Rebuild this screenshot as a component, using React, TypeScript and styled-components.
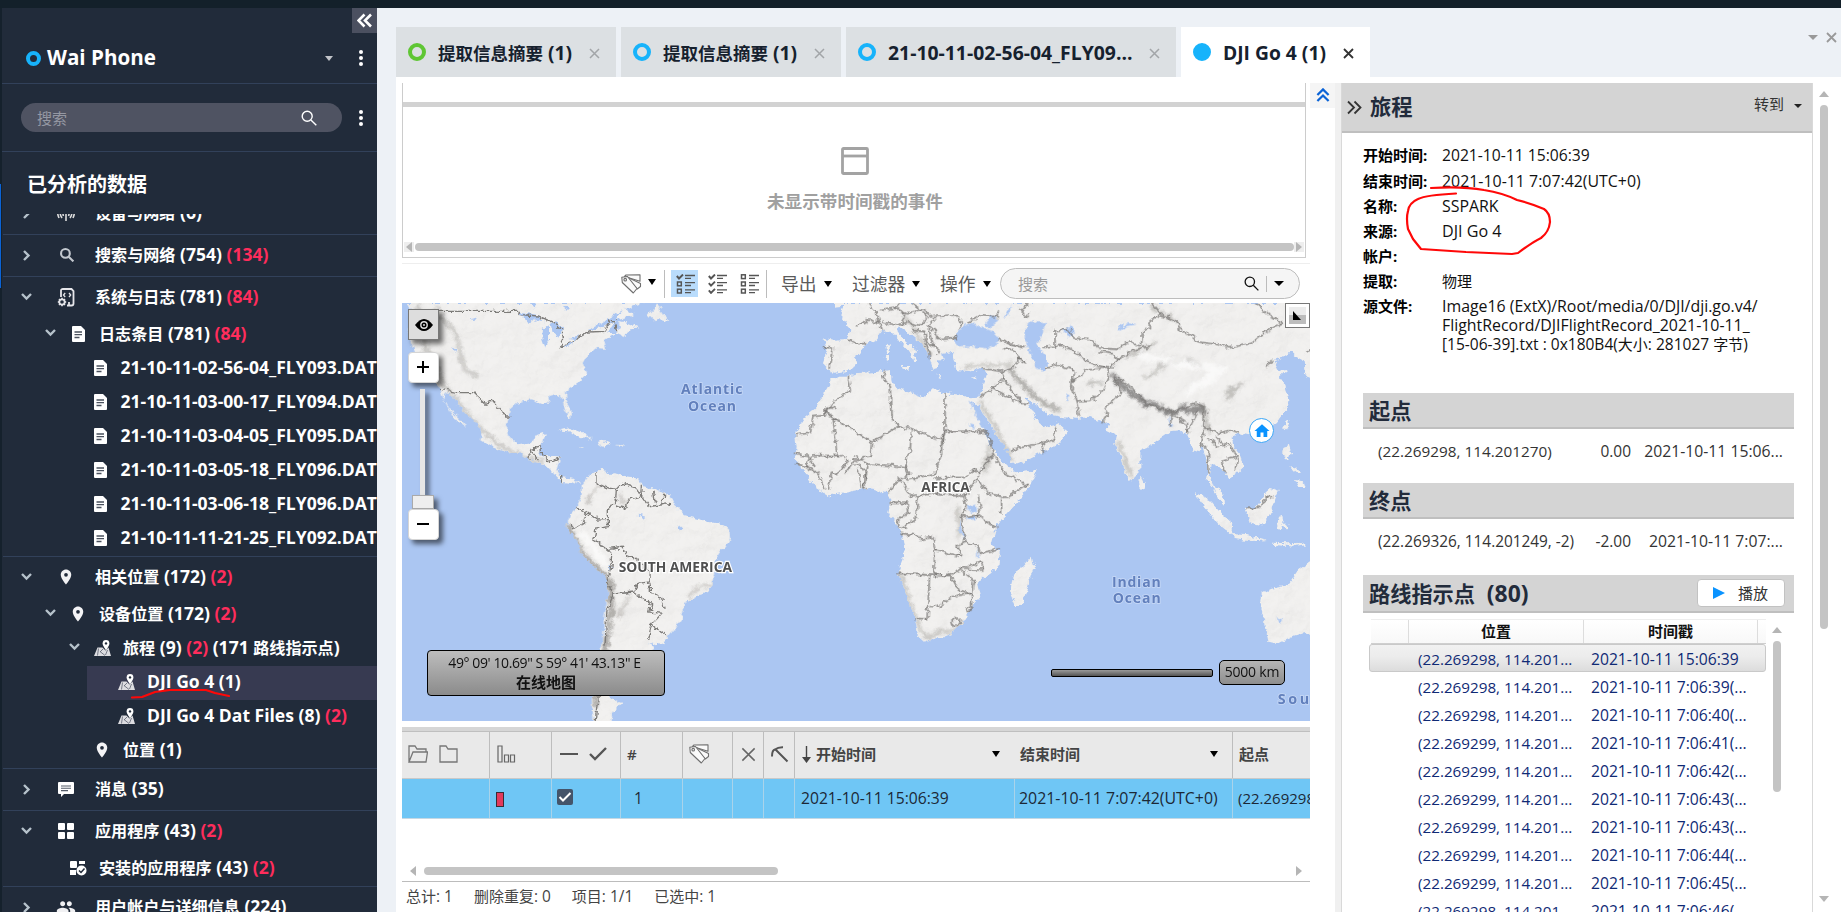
import React from 'react';
import styled, { createGlobalStyle, css } from 'styled-components';
import { MdLocationOn, MdPeople, MdHome } from 'react-icons/md';

const GlobalStyle = createGlobalStyle`
  *, *::before, *::after { box-sizing: border-box; }
  body {
    margin: 0;
    overflow: hidden;
    font-family: "Open Sans", "Noto Sans CJK SC", sans-serif;
    font-size: 15px;
    line-height: 20px;
    color: #111;
  }
  svg { display: block; flex: none; }
`;

/* ---------- text ---------- */

const Run = styled.span`
  white-space: pre;
`;
const LatinRun = styled.span<{ $ratio: number }>`
  font-size: ${p => p.$ratio}em;
  line-height: 1;
  white-space: pre;
`;
const Alert = styled.span`
  color: #ff2d5c;
`;

function Mixed({ text, ratio = 1.03 }: { text: string; ratio?: number }) {
  return (
    <Run>
      {text.split(/([\u4e00-\u9fff]+)/).map((part, i) =>
        i % 2 ? part : part ? <LatinRun key={i} $ratio={ratio}>{part}</LatinRun> : null,
      )}
    </Run>
  );
}

/* ---------- frame ---------- */

const Window = styled.div`
  width: 1841px;
  height: 912px;
  display: flex;
  flex-direction: column;
  background: #edf1f6;
  overflow: hidden;
  position: relative;
`;
const TopStrip = styled.div`
  height: 8px;
  flex: none;
  background: #13202a;
`;
const Body = styled.div`
  flex: 1;
  display: flex;
  min-height: 0;
`;
const Edge = styled.div`
  width: 2px;
  padding-top: 176px;
  background: #15212c;
`;
const EdgeMark = styled.div`
  width: 1px;
  height: 104px;
  background: #0b63d6;
`;

/* ---------- sidebar ---------- */

const Sidebar = styled.aside`
  width: 375px;
  background: #212b3a;
  color: #fff;
  display: flex;
  flex-direction: column;
  overflow: hidden;
  font-weight: 700;
`;
const DeviceHeader = styled.header`
  height: 76px;
  flex: none;
  border-bottom: 1px solid #32415a;
  display: flex;
  align-items: center;
  padding: 25px 14px 0 24px;
  position: relative;
`;
const CollapseButton = styled.button`
  position: absolute;
  right: 0;
  top: 0;
  width: 25px;
  height: 25px;
  border: 0;
  padding: 0 0 0 5px;
  background: #4b5060;
  color: #fff;
`;
const Ring = styled.span<{ $size: number; $color: string; $filled?: boolean }>`
  width: ${p => p.$size}px;
  height: ${p => p.$size}px;
  flex: none;
  border-radius: 50%;
  border: 4px solid ${p => p.$color};
  background: ${p => (p.$filled ? p.$color : 'transparent')};
`;
const DeviceName = styled.span`
  font-size: 20.6px;
  line-height: 26px;
  margin: -2px auto 0 6px;
`;
const Triangle = styled.i<{ $w: number; $h: number; $color: string }>`
  width: 0;
  height: 0;
  flex: none;
  border-left: ${p => p.$w / 2}px solid transparent;
  border-right: ${p => p.$w / 2}px solid transparent;
  border-top: ${p => p.$h}px solid ${p => p.$color};
`;
const Kebab = styled.span`
  width: 4px;
  display: flex;
  flex-direction: column;
  gap: 2px;
  margin-left: 26px;
  &::before, &::after, & > i {
    content: "";
    width: 4px;
    height: 4px;
    border-radius: 2px;
    background: #fff;
  }
`;
const SearchRow = styled.div`
  height: 68px;
  flex: none;
  border-bottom: 1px solid #32415a;
  display: flex;
  align-items: center;
  padding: 0 14px 0 19px;
  & > ${Kebab} { margin-left: 17px; }
`;
const SidebarSearch = styled.div`
  width: 321px;
  height: 29px;
  border-radius: 15px;
  background: #4f5362;
  color: #9598a3;
  font-weight: 400;
  display: flex;
  align-items: center;
  justify-content: space-between;
  padding: 0 25px 0 16px;
`;
const TreeTitle = styled.h2`
  margin: 0;
  height: 62px;
  flex: none;
  padding: 18px 0 0 25px;
  font-size: 20px;
  line-height: 30px;
`;
const Tree = styled.div`
  flex: 1;
  min-height: 0;
  overflow: hidden;
  padding-left: 1px;
`;
const Group = styled.section<{ $cut?: boolean }>`
  border-bottom: 1px solid #32415a;
  ${p => p.$cut && css`margin-top: -21px;`}
`;
const GroupRow = styled.div`
  height: 41px;
  padding-bottom: 1px;
  display: flex;
  align-items: center;
  font-size: 16.1px;
  white-space: nowrap;
`;
const Twist = styled.span`
  width: 24px;
  padding-left: 6px;
  margin-left: 12px;
  color: #b6c2cb;
  display: flex;
`;
const GroupIcon = styled.span`
  width: 24px;
  margin: 0 17px 0 15px;
  display: flex;
  justify-content: center;
  color: #f1f1f3;
`;
const ItemRow = styled.div<{ $level: number; $selected?: boolean }>`
  height: 34px;
  margin-left: ${p => 12 + p.$level * 24}px;
  padding-bottom: 3px;
  display: flex;
  align-items: center;
  font-size: 16.1px;
  white-space: nowrap;
  background: ${p => (p.$selected ? '#373a51' : 'transparent')};
  & > ${Twist} { margin-left: 0; }
`;
const ItemIcon = styled.span`
  width: 24px;
  margin: 0 9px 0 3px;
  display: flex;
  justify-content: center;
  color: #f4f4f6;
`;

/* ---------- tabs ---------- */

const Main = styled.main`
  flex: 1;
  min-width: 0;
  display: flex;
  flex-direction: column;
  padding-left: 19px;
`;
const TabBar = styled.nav`
  height: 69px;
  flex: none;
  display: flex;
  align-items: flex-end;
  gap: 5px;
`;
const Tab = styled.div<{ $width: number; $active?: boolean }>`
  width: ${p => p.$width}px;
  height: 50px;
  background: ${p => (p.$active ? '#fff' : '#dce0e3')};
  color: ${p => (p.$active ? '#333' : '#a2a5a8')};
  display: flex;
  align-items: center;
  padding: 2px 16px 0 12px;
  & > ${Ring} { margin-top: -2px; }
`;
const TabLabel = styled.span`
  margin: -1px auto 0 12px;
  font-size: 17.5px;
  font-weight: 700;
  color: #16212e;
  white-space: nowrap;
`;
const TabTools = styled.div`
  margin-left: auto;
  align-self: flex-start;
  display: flex;
  align-items: center;
  gap: 8px;
  padding: 24px 4px 0 0;
  color: #999;
`;
const Workspace = styled.div`
  flex: 1;
  min-height: 0;
  background: #fff;
  display: flex;
  padding: 6px 0 0 6px;
`;

/* ---------- center column ---------- */

const Center = styled.div`
  width: 908px;
  flex: none;
  display: flex;
  flex-direction: column;
`;
const Timeline = styled.section`
  width: 904px;
  height: 175px;
  flex: none;
  border: 1px solid #ccc;
  border-top: 0;
  padding-top: 19px;
  display: flex;
  flex-direction: column;
`;
const TimelineBar = styled.div`
  height: 5px;
  background: #d2d2d2;
`;
const TimelineEmpty = styled.div`
  height: 135px;
  padding: 40px 0 0 2px;
  display: flex;
  flex-direction: column;
  align-items: center;
  gap: 14px;
  font-size: 17.6px;
  line-height: 24px;
  font-weight: 700;
  color: #a0a0a0;
`;
const HScroll = styled.div<{ $indent: number }>`
  height: 10px;
  display: flex;
  align-items: center;
  justify-content: space-between;
  padding: 0 ${p => p.$indent}px;
`;
const HThumb = styled.div<{ $width: number; $grow?: boolean }>`
  width: ${p => p.$width}px;
  height: 8px;
  border-radius: 4px;
  background: #c4c4c4;
  margin: 0 auto 0 ${p => (p.$grow ? 1 : 6)}px;
`;
const ArrowCell = styled.span<{ $shade?: boolean }>`
  width: 10px;
  height: 10px;
  display: flex;
  align-items: center;
  justify-content: center;
  background: ${p => (p.$shade ? '#eee' : 'transparent')};
  color: #b9b9b9;
`;
const Toolbar = styled.div`
  height: 40px;
  margin-top: 5px;
  flex: none;
  border-top: 1px solid #eee;
  display: flex;
  align-items: center;
  padding: 0 10px 0 219px;
  color: #5a5a5a;
`;
const Divider = styled.i<{ $h: number; $gap: string }>`
  width: 1px;
  height: ${p => p.$h}px;
  margin: ${p => p.$gap};
  background: #bcbcbc;
`;
const TagCaret = styled(Triangle)`
  margin: -3px 0 0 6px;
`;
const ToolToggle = styled.span<{ $on?: boolean }>`
  width: 27px;
  height: 27px;
  margin-right: 5px;
  display: flex;
  align-items: center;
  justify-content: center;
  padding-left: 2px;
  background: ${p => (p.$on ? '#b9dcfc' : 'transparent')};
`;
const ToolMenu = styled.span<{ $width: number }>`
  width: ${p => p.$width}px;
  display: flex;
  align-items: center;
  gap: 7px;
  font-size: 17.8px;
  white-space: nowrap;
`;
const ToolSearch = styled.div`
  width: 300px;
  height: 31px;
  margin-left: auto;
  flex: none;
  border: 1px solid #bdbdbd;
  border-radius: 16px;
  background: #f5f5f5;
  color: #9a9a9a;
  display: flex;
  align-items: center;
  padding: 0 15px 0 17px;
  & > span { margin-right: auto; }
`;

/* ---------- map ---------- */

const MapView = styled.section`
  width: 908px;
  height: 418px;
  flex: none;
  position: relative;
  overflow: hidden;
  background: #abc6f2;
`;
const shadow = css`box-shadow: 4px 4px 5px rgba(0, 0, 0, 0.55);`;
const EyeButton = styled.div`
  position: absolute;
  left: 6px;
  top: 6px;
  width: 31px;
  height: 31px;
  border: 1px solid #777;
  background: #ddd;
  display: flex;
  align-items: center;
  justify-content: center;
  ${shadow}
`;
const ZoomTools = styled.div`
  position: absolute;
  left: 6px;
  top: 49px;
  width: 31px;
  display: flex;
  flex-direction: column;
  align-items: center;
`;
const ZoomButton = styled.div`
  width: 31px;
  height: 31px;
  border-radius: 4px;
  border: 1px solid #d5d5d5;
  background: #fff;
  display: flex;
  align-items: center;
  justify-content: center;
  padding: 0 1px 1px 0;
  ${shadow}
`;
const ZoomTrack = styled.div`
  width: 5px;
  height: 106px;
  margin: 6px 3px 0 0;
  background: #e6e6e6;
  ${shadow}
`;
const ZoomThumb = styled.div`
  width: 22px;
  height: 14px;
  margin-right: 1px;
  background: #eee;
  border: 1px solid #aaa;
  ${shadow}
`;
const CoordBox = styled.div`
  position: absolute;
  left: 25px;
  top: 347px;
  width: 238px;
  height: 46px;
  border: 1px solid #000;
  border-radius: 4px;
  background: linear-gradient(#bdbdbd, #8b8b8b);
  text-align: center;
  font-size: 14px;
  line-height: 20px;
  padding: 2px 0 0 0;
  & > span { letter-spacing: -0.4px; margin-right: 3px; }
  & > strong { display: block; font-size: 15px; line-height: 19px; }
`;
const Scale = styled.div`
  position: absolute;
  right: 25px;
  bottom: 36px;
  display: flex;
  align-items: center;
  gap: 6px;
`;
const ScaleBar = styled.div`
  width: 162px;
  height: 8px;
  border: 1px solid #000;
  border-radius: 2px;
  background: linear-gradient(#9b9b9b, #555);
`;
const ScaleLabel = styled.div`
  width: 66px;
  height: 25px;
  border: 1px solid #000;
  border-radius: 5px;
  background: linear-gradient(#b5b5b5, #8e8e8e);
  font-size: 14px;
  letter-spacing: -0.2px;
  line-height: 22px;
  text-align: center;
`;
const CornerButton = styled.div`
  position: absolute;
  right: 0;
  top: 0;
  width: 25px;
  height: 25px;
  border: 1px solid #777;
  background: #fff;
  padding: 3px;
  & > div {
    height: 17px;
    background: linear-gradient(#ececec 50%, #bdbdbd 50%);
    padding: 4px 0 0 4px;
  }
`;
const HomePin = styled.div`
  position: absolute;
  left: 847px;
  top: 115px;
  width: 25px;
  height: 25px;
  border: 1.5px solid #3ba5f5;
  border-radius: 50%;
  background: #fff;
  color: #0a93ff;
  display: flex;
  align-items: center;
  justify-content: center;
`;

/* ---------- event table ---------- */

const TableWrap = styled.section`
  margin-top: 6px;
  height: 155px;
  flex: none;
  border-bottom: 1px solid #bcbcbc;
  display: flex;
  flex-direction: column;
  overflow: hidden;
`;
const TableBar = styled.div`
  height: 4px;
  flex: none;
  background: #d6d6d6;
`;
const TableLine = styled.div<{ $head?: boolean }>`
  height: ${p => (p.$head ? 48 : 40)}px;
  flex: none;
  display: grid;
  grid-template-columns: 88px 62px 69px 62px 50px 31px 31px 220px 218px 77px;
  overflow: hidden;
  background: ${p => (p.$head ? '#e9e9e9' : '#6fc6f5')};
  border-top: ${p => (p.$head ? '1px solid #bfbfbf' : 0)};
  border-bottom: 1px solid ${p => (p.$head ? '#c9c9c9' : '#c5d8e4')};
  font-weight: ${p => (p.$head ? 600 : 400)};
  color: ${p => (p.$head ? '#444' : '#1c2836')};
`;
const Cell = styled.div<{ $pad: number; $line?: string; $end?: number }>`
  display: flex;
  align-items: center;
  white-space: nowrap;
  overflow: hidden;
  padding: 0 ${p => p.$end ?? 0}px 2px ${p => p.$pad}px;
  border-right: ${p => (p.$line === 'none' ? 0 : 1)}px solid ${p => p.$line ?? '#bdbdbd'};
  gap: 11px;
`;
const Flag = styled.i`
  width: 8px;
  height: 15px;
  margin-top: 4px;
  border: 1px solid #3b2b35;
  background: #e23a5d;
`;
const Check = styled.span`
  width: 16px;
  height: 16px;
  border-radius: 2px;
  background: #44546a;
  margin-top: -1px;
`;
const StatusBar = styled.footer`
  display: flex;
  gap: 21px;
  padding: 4px 0 0 4px;
  color: #444;
`;

/* ---------- side controls ---------- */

const UpButton = styled.div`
  width: 25px;
  height: 25px;
  flex: none;
  background: #f5f5f5;
  padding: 5px 0 0 6px;
`;
const Splitter = styled.div`
  width: 6px;
  flex: none;
  background: #f0f0f0;
`;

/* ---------- detail panel ---------- */

const Detail = styled.section`
  width: 472px;
  flex: none;
  border: solid #d9d9d9;
  border-width: 0 1px;
  display: flex;
  flex-direction: column;
  overflow: hidden;
`;
const DetailHeader = styled.header`
  height: 50px;
  margin: 0 -1px;
  flex: none;
  background: #d4d4d4;
  border-bottom: 2px solid #bfbfbf;
  display: flex;
  align-items: center;
  padding: 0 11px 0 6px;
  font-size: 15px;
  color: #333;
  & > h1 { margin: 0 auto 0 8px; font-size: 21.3px; line-height: 30px; color: #222b3b; }
  & > span { margin: -7px 10px 0 0; }
  & > i { margin-top: -3px; }
`;
const DetailBody = styled.div`
  padding: 13px 18px 0 21px;
  display: flex;
  flex-direction: column;
`;
const Facts = styled.dl`
  margin: 0;
  height: 247px;
`;
const Fact = styled.div<{ $tall?: boolean }>`
  display: grid;
  grid-template-columns: 79px 1fr;
  height: ${p => (p.$tall ? 26 : 25)}px;
  line-height: 19px;
  color: #111;
  & > dt { font-weight: 700; color: #000; }
  & > dd { margin: 0; white-space: nowrap; }
`;
const SectionHead = styled.h3<{ $h: number }>`
  height: ${p => p.$h}px;
  margin: 0;
  background: #d4d4d4;
  border-bottom: 2px solid #bfbfbf;
  color: #222b3b;
  font-size: 21.2px;
  line-height: 30px;
  display: flex;
  align-items: center;
  justify-content: space-between;
  padding: 2px 9px 0 6px;
`;
const PointRow = styled.div<{ $gap: number }>`
  height: 44px;
  margin-bottom: ${p => p.$gap}px;
  display: grid;
  grid-template-columns: 205px 48px 1fr;
  align-items: center;
  padding: 0 11px 1px 15px;
  white-space: nowrap;
  color: #333;
  & > :nth-child(n + 2) { text-align: right; }
`;
const PlayButton = styled.button`
  width: 88px;
  height: 28px;
  margin-top: -2px;
  border: 1px solid #c2c2c2;
  border-radius: 4px;
  background: #fff;
  color: #333;
  font: 15px/20px "Open Sans", "Noto Sans CJK SC", sans-serif;
  display: flex;
  align-items: center;
  gap: 13px;
  padding: 0 0 0 15px;
`;
const Waypoints = styled.div`
  display: flex;
  margin: 6px 0 0 6px;
`;
const WaypointTable = styled.div`
  width: 397px;
`;
const WaypointHead = styled.div`
  height: 25px;
  margin-left: 2px;
  display: grid;
  grid-template-columns: 38px 175px 174px 8px;
  border-top: 1px solid #eee;
  border-bottom: 1px solid #cfcfcf;
  background: linear-gradient(#fff, #f8f8f8);
  font-weight: 600;
  color: #111;
  text-align: center;
  line-height: 23px;
  & > div { border-right: 1px solid #ddd; }
  & > div:last-child { border-right: 0; }
`;
const WaypointRow = styled.div<{ $on?: boolean }>`
  height: 28px;
  display: grid;
  grid-template-columns: 48px 173px 1fr;
  align-items: center;
  white-space: nowrap;
  color: #102a75;
  border: 1px solid ${p => (p.$on ? '#c9c9c9' : 'transparent')};
  border-radius: 3px;
  background: ${p => (p.$on ? 'linear-gradient(#f1f1f1, #ececec 45%, #dcdcdc)' : 'none')};
  padding-top: 1px;
`;
const VScroll = styled.div<{ $width: number }>`
  width: ${p => p.$width}px;
  flex: none;
  display: flex;
  flex-direction: column;
  align-items: center;
`;
const VThumb = styled.div<{ $h: number }>`
  width: 8px;
  height: ${p => p.$h}px;
  border-radius: 4px;
  background: #c4c4c4;
`;
const OuterScroll = styled(VScroll)`
  padding: 8px 0 10px 0;
  margin-left: 3px;
  justify-content: space-between;
  & > div { margin: 8px 0 auto; }
`;
const InnerScroll = styled(VScroll)`
  padding-top: 8px;
  margin-left: 2px;
  gap: 8px;
`;
const Ink = styled.svg`
  position: absolute;
  left: 0;
  top: 0;
  pointer-events: none;
`;
const LensWhite = styled.span`
  color: #fff;
`;
const LensDark = styled.i`
  color: #111;
`;
const GrayLens = styled.span`
  color: #c3c8cf;
  margin-left: 2px;
`;
const GrayInk = styled.span`
  color: #666;
`;
const HeadText = styled.span<{ $shift: number }>`
  margin: 0 auto 0 ${p => p.$shift}px;
`;
const TableScroll = styled(HScroll)`
  margin-top: 47px;
`;

/* ---------- icons ---------- */

const Chevron = ({ open }: { open?: boolean }) => (
  <svg width="11" height="11" viewBox="0 0 11 11" fill="none" stroke="currentColor" strokeWidth="2.4">
    <path d={open ? 'M1 2l4.500 4.500L10 2' : 'M3 1l4.500 4.500L3 10'} />
  </svg>
);
const DoubleChevron = ({ turn = 0, color = 'currentColor', w = 2.4, size = 15 }: { turn?: number; color?: string; w?: number; size?: number }) => (
  <svg width={size} height={size} viewBox="0 0 15 15" fill="none" stroke={color} strokeWidth={w}>
    <path transform={`rotate(${turn} 7.5 7.5)`} d="M7.5 1.5l-6 6 6 6M14 1.5l-6 6 6 6" />
  </svg>
);
const Lens = ({ size = 16, w = 1.4 }: { size?: number; w?: number }) => (
  <svg width={size} height={size} viewBox="0 0 16 16" fill="none" stroke="currentColor" strokeWidth={w}>
    <circle cx="6.2" cy="6.2" r="5" />
    <path d="M9.9 9.9l5.4 5.4" />
  </svg>
);
const Cross = ({ size = 11, w = 1.5 }: { size?: number; w?: number }) => (
  <svg width={size} height={size} viewBox="0 0 11 11" stroke="currentColor" strokeWidth={w}>
    <path d="M1 1l9 9M10 1l-9 9" />
  </svg>
);
const DocIcon = () => (
  <svg width="13" height="16" viewBox="0 0 13 16">
    <path d="M1 0h8l4 4v11a1 1 0 0 1-1 1H1a1 1 0 0 1-1-1V1a1 1 0 0 1 1-1z" fill="#fff" />
    <path d="M2.500 6h7.500M2.500 8.700h7.500M2.500 11.500h5" stroke="#4a515e" strokeWidth="1.300" />
  </svg>
);
const LogIcon = () => (
  <svg width="18" height="19" viewBox="0 0 18 19" fill="none" stroke="#e6e6ea" strokeWidth="1.8">
    <path d="M4 9V2.500Q4 1 6 1h8.500L16.500 3v12.500q0 2-2 2H10M12 17v-3" />
    <path d="M8.200 5L6.500 7l1.700 2M12 5l1.700 2L12 9" strokeWidth="1.300" />
    <circle cx="5" cy="14" r="2.700" />
    <path d="M5 9.800v1.500M5 16.700v1.500M.800 14h1.500M7.700 14h1.500M2 11l1 1M7 16l1 1M8 11l-1 1M3 16l-1 1" strokeWidth="1.600" />
  </svg>
);
const JourneyIcon = () => (
  <svg width="17" height="16" viewBox="0 0 17 16">
    <path d="M3.500 7.500h5l3 3 3-3 2.500 8.500H0z" fill="#dcdce0" />
    <path d="M4.500 8.500l-1 7M6 11.500l5 4M9 9l-3 3M13.500 10l-2 5" stroke="#5a606e" strokeWidth=".8" fill="none" />
    <path d="M12 0a3.400 3.400 0 0 1 3.400 3.400C15.400 5.700 12 10 12 10S8.600 5.700 8.600 3.400A3.400 3.400 0 0 1 12 0z" fill="#fff" />
    <circle cx="12" cy="3.400" r="1.200" fill="#212b3a" />
  </svg>
);
const SpeechIcon = () => (
  <svg width="16" height="15" viewBox="0 0 16 15">
    <path d="M1 0h14a1 1 0 0 1 1 1v10a1 1 0 0 1-1 1H6l-3 3v-3H1a1 1 0 0 1-1-1V1a1 1 0 0 1 1-1z" fill="#fff" />
    <path d="M3 4h10M3 6.300h10M3 8.600h7" stroke="#555c69" strokeWidth="1.100" />
  </svg>
);
const AppsIcon = () => (
  <svg width="16" height="16" viewBox="0 0 16 16" fill="#fff">
    <rect width="7" height="7" rx="1" /><rect x="9" width="7" height="7" rx="1" />
    <rect y="9" width="7" height="7" rx="1" /><rect x="9" y="9" width="7" height="7" rx="1" />
  </svg>
);
const InstalledIcon = () => (
  <svg width="17" height="16" viewBox="0 0 17 16" fill="#fff">
    <rect y="1" width="7" height="7" rx="1" /><path d="M9 1h6v3H9zM0 10h6v5H0z" />
    <circle cx="11.500" cy="10.500" r="5" />
    <path d="M9 10.500l2 2 3.500-4" fill="none" stroke="#212b3a" strokeWidth="1.500" />
  </svg>
);
const NetIcon = () => (
  <svg width="18" height="16" viewBox="0 0 18 16" fill="none" stroke="#ddd" strokeWidth="1.600">
    <path d="M9 4v12M4 5q-2 4 1 8M14 5q2 4-1 8M1 4q-1 5 1 9M17 4q1 5-1 9M6.500 7q-1 2 0 4M11.500 7q1 2 0 4" />
  </svg>
);
const TagIcon = () => (
  <svg width="21" height="20" viewBox="0 0 21 20" fill="#fafafa" stroke="#6f6f6f" strokeWidth="1.100" strokeLinejoin="round">
    <path d="M3.500 2.500L5 1l14-.200v6.500z" />
    <path d="M5 2.500l14.500 7v3l-3.200 2.500z" />
    <path d="M.800 3.300L6.500 2.500 16 14.500 12.300 19 1.300 8.500z" />
    <circle cx="4.200" cy="5.700" r="1.300" />
  </svg>
);
const ListIcon = ({ marks }: { marks: string }) => (
  <svg width="20" height="20" viewBox="0 0 20 20" fill="none" stroke="#555" strokeWidth="1.500">
    {marks.split('').map((m, i) => (
      <g key={i} transform={`translate(0 ${i * 7.200})`}>
        {m === 'v' ? <path d="M.800 2l2.200 2.500L7 .500" strokeWidth="1.900" /> : <rect x="1.500" y=".800" width="3.800" height="3.800" />}
        <path d="M9 1.500h10M9 4.300h6" strokeWidth="1.300" />
      </g>
    ))}
  </svg>
);
const SmallArrow = ({ d }: { d: string }) => (
  <svg width="10" height="10" viewBox="0 0 10 10" fill="#b5b5b5"><path d={d} /></svg>
);
const arrowLeft = 'M8 0v10L2 5z';
const arrowRight = 'M2 0v10l6-5z';

/* ---------- world map, drawn on a 2724 x 1254 grid ---------- */

const americas = [
  'M38 129L52 160 42 200 44 240 60 280 85 330 130 372 136 392 152 425 175 460 192 475 212 500 206 498 182 478 160 444 150 425 148 398 172 405 186 428 205 452 238 482 262 518 258 540 292 562 340 580 375 577 400 598 450 614 478 640 500 668 530 672 550 660 560 678 545 662 530 656 502 652 484 630 495 594 462 588 430 590 440 556 452 520 425 528 410 550 372 556 347 535 334 502 342 468 345 448 366 428 410 418 440 430 466 424 462 410 490 404 506 420 514 454 524 480 528 462 514 420 513 394 546 370 576 340 564 312 582 280 604 264 630 266 626 246 658 222 676 204 672 186 700 192 736 206 705 208 688 232 666 222 640 222 660 180 716 166 690 146 745 129z',
  'M758 164L788 132 796 150 820 184 800 178 780 184z',
  'M485 510L520 502 560 518 590 536 560 532 520 514z', 'M604 546L625 542 648 552 625 560z', 'M662 554l24 1-4 5-18-1z', 'M552 556l14 0-6 5z',
  'M560 675L582 648 606 632 622 628 640 642 662 640 700 650 724 652 742 676 780 690 826 706 848 746 866 766 912 776 946 790 986 796 1006 816 1008 836 982 870 962 900 960 946 944 986 920 1004 876 1026 862 1050 856 1080 836 1110 814 1138 802 1152 782 1156 762 1146 778 1166 750 1182 700 1230 640 1290 648 1318 682 1330 652 1356 650 1384 596 1384 590 1320 612 1296 600 1230 606 1180 624 1150 626 1080 640 1000 636 956 600 922 565 884 540 832 514 802 526 762 546 740 560 712z',
];
const oldWorld = [
  'M-30 129L-45 168-32 182-14 206-22 240-60 242-95 238-82 266-96 310-80 326-60 338-30 334 0 320 4 290 30 256 62 240 80 214 112 216 140 250 170 286 176 312 186 302 180 280 190 276 150 244 130 216 135 200 170 225 206 256 224 292 236 330 250 326 244 300 266 302 262 282 290 276 298 304 305 330 350 334 386 326 396 342 384 376 370 410 368 430 396 482 424 524 455 570 470 612 500 606 560 576 612 550 640 516 606 486 602 494 570 502 546 480 520 430 514 414 536 430 580 462 620 470 666 476 700 470 736 482 760 490 754 510 786 526 780 550 796 592 820 662 836 660 856 620 856 576 900 546 946 514 976 510 1000 530 1014 574 1034 580 1040 552 1056 602 1060 640 1055 660 1080 690 1090 720 1108 738 1104 708 1094 688 1075 678 1064 650 1070 612 1100 626 1122 656 1146 640 1166 620 1160 590 1136 562 1130 532 1156 520 1186 526 1230 510 1262 490 1294 450 1300 420 1290 372 1274 350 1300 326 1270 330 1256 304 1290 290 1310 276 1326 292 1346 302 1350 346 1380 356V129z',
  'M-50 350L-20 350 6 340 60 336 106 330 110 362 124 384 150 390 206 412 230 388 270 400 320 404 346 412 372 410 376 440 350 424 366 462 390 510 402 552 440 602 464 622 480 640 545 630 530 672 490 720 446 770 424 800 410 850 434 880 430 922 390 950 366 970 376 1012 350 1042 320 1090 290 1120 250 1136 210 1148 190 1130 180 1076 160 1020 136 960 130 930 150 880 140 820 130 800 100 762 106 720 95 700 60 690 30 686-20 696-80 706-120 680-150 640-180 600-175 560-180 520-150 470-120 446-95 404-70 360z',
  'M530 890l7 30-22 70-15 45-20 0-15-35 10-60 30-20z', 'M860 650l12 25-4 14-14-4-2-20z', 'M1298 475l4 15-9 22-9-12z',
  'M1020 698L1060 718 1100 762 1132 790 1128 822 1090 792 1050 742z', 'M1130 822l50 4 55 14-35 4-60-10z', 'M1252 848l45 2 50-2 5 8-30 4-70-6z',
  'M1168 740L1202 744 1230 702 1250 684 1268 696 1258 716 1245 770 1220 796 1184 786z', 'M1286 560l16-4 6 20-8 24-14-6-4-16z', 'M1306 618l20 6 12 18-14-4-10-8z', 'M1320 660l24 4 6 20-20-6z',
  'M1272 770l10-2 4 18 16 16-8 4-12-10-8 14-8-12z', 'M1380 904L1366 906 1330 932 1300 976 1250 986 1220 1000 1214 1030 1230 1082 1240 1146 1272 1150 1320 1126 1380 1114z',
  'M94 262l10-10 0 24-8 0zM94 282l8 0 0 20-10-4z', 'M138 318l26 0-4 12z', 'M240 344l24 2-8 4z', 'M348 356l16-4-8 8z',
];
const inland = [
  'M372 155L400 160 428 165 450 184 420 178 402 192z', 'M444 206L462 198 462 240 452 266 442 236z', 'M466 188L484 184 504 206 490 236 472 214z', 'M494 262L520 250 540 244 520 260z', 'M520 234l34-8-12 12z', 'M575 212L620 190 680 150 660 180 620 204z',
  'M215 176l34-6-8 10zM170 262l14 8-4 10z', 'M405 129l12 20 8-20z', 'M500 140l22 4-8 8z', 'M730 764l22 6-12 6zM848 792l14 14-8 6z', 'M640 916l10 6-6 10z',
];
const inlandEast = [
  'M312 212L346 188 380 202 420 218 432 246 400 266 350 260 306 262 298 240z', 'M388 192L410 164 428 184 404 206z', 'M508 208L530 184 572 190 558 230 546 252 576 290 576 332 545 330 530 290 510 240z', 'M622 212L652 194 656 222 640 232z',
  'M786 206L820 186 848 194 812 198 792 216z', 'M336 740l26-6 4 18-26 4zM338 770l28-4-4 12-24 2z', 'M345 420l12 16 20 34 14 40-10-10-20-38z', 'M314 780l6 30 12 26-8-4-12-26z', 'M366 860l6 36-6-4z', 'M630 400l14 6-6 18z', 'M344 490l16 4-8 14z', 'M1268 1076l14 2-8 12z', 'M940 470l14 26-8 10z', 'M448 170l12-20 8-20-4 36z',
];
const bordersWest =
  'M50 154H370L378 164 430 168 480 190 502 212 506 240 496 262 540 240 580 216 630 214 642 182 660 182 668 216M132 388L190 398 236 398 270 430 294 424 318 448 332 468 346 468M398 596L408 568 438 560 440 582 470 606 494 596M410 574L430 600M500 646V668M606 632L606 670 638 684 664 688 662 720 640 750 640 800 604 804 596 840 630 862 650 878 648 920 636 960 656 1004 636 1046 630 1160M664 688L680 670 724 684 740 708 700 718 690 744 662 738M742 680L740 712 760 740 828 730M776 694L780 730M806 700L804 734M544 742L574 756 608 780 640 778M574 756L566 786 536 806 526 792M630 870L684 862 692 886 730 902 766 938 764 966 728 970 716 996 656 1002M716 996L770 1034 764 1056 800 1060 770 1094 816 1130M766 970V996L800 1014 808 1046M770 1094L758 1140M610 1310L600 1384';
const bordersEast =
  'M-94 262L-68 264-78 324M-20 240L0 250 34 252M0 200L40 180 70 186 80 214M70 186L64 158 40 129M74 152L120 144 132 129M80 186L130 196 148 186 196 196 220 174 206 160M132 150L160 162 206 150 230 170 300 164 322 190 312 206M120 144L150 160 140 190M170 212L208 214 216 248 246 262 250 280M220 196L238 210 250 236 310 232M240 176L222 196 226 228 236 256M206 236L220 268 224 294M170 129L200 150M430 150L426 172 380 164 340 186M425 236L460 250 500 262 512 262M446 262L480 274 496 300 514 310M520 129L500 150 510 170 526 160M600 268V212L640 206 658 234 710 240 730 264 786 268 820 246 860 256 862 216 886 206 886 182 920 164 892 129M920 164L968 186 974 210 1010 226 1030 246 1080 252 1126 264 1190 250 1230 216 1280 190 1240 164 1200 129M566 262L620 256 652 270 690 300 726 316 760 324 790 300 770 280 730 276M576 324L610 314 656 330 650 380 664 426 704 424 740 396 760 350 760 324 700 326 652 366M664 426L674 470M740 490L760 460 750 446 800 396 776 350M786 300L840 270 886 258M776 352L830 382 870 430 950 456 980 444 1030 430 1050 450 1046 500 1090 520 1130 510 1154 520M950 458L946 500M962 470L990 486 998 520 1010 490 1030 450M1050 500L1036 550 1060 570 1062 640M1060 534L1086 560 1120 550 1148 590 1100 604 1108 636M1080 530L1110 560M1148 596L1140 630M1174 742L1216 742 1234 712 1252 714M1254 300L1230 320M1354 276L1380 264M386 326L440 334 478 320 490 298 514 306M440 334L446 356 410 386 374 412M446 356L500 430 518 430M410 386L430 396 500 430M466 576L480 566 550 552 596 540 600 500M560 552L566 578M90 330L84 352 106 380 108 470 130 500 50 546-20 500-90 456M-56 450L-68 440-90 446-90 466-126 470-134 520-180 524M-20 350L-14 390-60 420-90 456M-90 456L-66 470-54 586-130 588-146 620-180 610M130 500L170 506 260 540V580L240 640 160 660 150 620 40 612 0 590M170 506L166 570 150 612M50 546L46 590 0 600-30 640M260 540L270 510V400M270 514H396M270 514L260 560M396 514L414 580 370 640 356 630 330 652 240 654M-54 586L-20 600-50 640-70 640-80 690M-146 620L-110 640-90 690M-180 580L-140 586-120 620M0 610L30 630V686M10 630L16 686M40 612L24 688M150 612L164 640 120 670 98 700M130 650L170 710 200 706 240 700 330 706 370 650 396 700 450 712 514 674 450 640 414 580M440 714V760M104 730H156L158 760 130 780 132 806M190 708L180 780 136 806M136 820L190 826 200 838 234 832 240 870 320 890 306 860 330 846 320 770 370 766 424 804M330 706L334 740 318 770M370 706L376 740 366 766M330 846L370 860 374 880 434 866M240 870L236 940 270 950 320 926 356 930 384 930 380 906 320 926M130 940L236 946 290 950M224 950L216 1076H178M224 1040L250 1040 290 1010 350 1000 356 960 320 932M290 950L310 990 350 1000 350 1046M290 1084l12-12 16 8-10 16-14 0zM332 1048l12-6 4 12-12 0z';

function WorldMap() {
  return (
    <svg width="908" height="418" viewBox="21 129 2724 1254" preserveAspectRatio="none">
      <defs>
        <filter id="coast" x="-5%" y="-5%" width="110%" height="110%">
          <feTurbulence type="fractalNoise" baseFrequency="0.06" numOctaves="3" seed="4" />
          <feDisplacementMap in="SourceGraphic" scale="20" xChannelSelector="R" yChannelSelector="G" />
        </filter>
        <filter id="soft" x="-20%" y="-20%" width="140%" height="140%">
          <feTurbulence type="fractalNoise" baseFrequency="0.025" numOctaves="3" seed="9" result="n" />
          <feDisplacementMap in="SourceGraphic" in2="n" scale="30" result="d" />
          <feGaussianBlur in="d" stdDeviation="5" />
        </filter>
        <filter id="relief" x="0" y="0" width="100%" height="100%">
          <feTurbulence type="fractalNoise" baseFrequency="0.009 0.011" numOctaves="5" seed="3" result="t" />
          <feDiffuseLighting in="t" surfaceScale="16" lightingColor="#fafaf8" result="l">
            <feDistantLight azimuth="225" elevation="64" />
          </feDiffuseLighting>
          <feComposite in="l" in2="SourceGraphic" operator="in" />
        </filter>
        <clipPath id="landWest">{americas.map(d => <path key={d} d={d} />)}</clipPath>
        <clipPath id="landEast">{oldWorld.map(d => <path key={d} d={d} />)}</clipPath>
      </defs>
      <g filter="url(#coast)">
        <g fill="#f1f0ee">
          {americas.map(d => <path key={d} d={d} />)}
          <g transform="translate(1380 0)">
            {oldWorld.map(d => <path key={d} d={d} />)}
            <path d="M-60 129l50 0-10 10-40 4z" />
          </g>
        </g>
        <g opacity=".17" filter="url(#relief)">
          {americas.map(d => <path key={d} d={d} />)}
          <g transform="translate(1380 0)">{oldWorld.map(d => <path key={d} d={d} />)}</g>
        </g>
        <g clipPath="url(#landWest)">
          <g fill="none" filter="url(#soft)" strokeLinecap="round">
            <path d="M70 140L90 250 150 380 250 500 330 570 450 610M120 140L180 220 210 330 250 350" stroke="#aaa8a4" strokeWidth="13" opacity=".5" />
            <path d="M520 800L560 880 645 965 650 1050 630 1180 600 1330" stroke="#8f8c88" strokeWidth="17" opacity=".7" />
            <path d="M570 720L620 680M670 700L690 730M700 1010L670 1070M880 1010L950 970" stroke="#a5a29e" strokeWidth="11" opacity=".5" />
            <path d="M570 830L630 910" stroke="#fff" strokeWidth="22" opacity=".6" />
          </g>
        </g>
        <g transform="translate(1380 0)">
          <g clipPath="url(#landEast)">
            <g fill="none" filter="url(#soft)" strokeLinecap="round">
              <path d="M770 345L810 385 870 430 950 455 1040 445" stroke="#6f6e6d" strokeWidth="18" opacity=".75" />
              <path d="M465 330L500 370 550 420 610 450" stroke="#85837f" strokeWidth="14" opacity=".6" />
              <path d="M890 145L960 180M820 290L900 250M870 350L960 300M1000 300L1040 320M1110 410L1160 370M1040 440L1060 510M700 370L740 370" stroke="#96948f" strokeWidth="11" opacity=".5" />
              <path d="M380 430L470 600M400 560L390 640M330 320L470 310M310 740L310 830M135 940L180 1070 210 1130 330 1100M790 550L830 650M160 180L220 280" stroke="#a4a19c" strokeWidth="12" opacity=".5" />
              <path d="M860 290L1100 330 1000 400" stroke="#fff" strokeWidth="24" opacity=".6" />
            </g>
          </g>
        </g>
        <g fill="#abc6f2">
          {inland.map(d => <path key={d} d={d} />)}
          <g transform="translate(1380 0)">{inlandEast.map(d => <path key={d} d={d} />)}</g>
        </g>
        <g fill="none" stroke="#7d7b79" strokeWidth="4">
          <path d={bordersWest} />
          <path d={bordersEast} transform="translate(1380 0)" />
        </g>
      </g>
      <g fontFamily="Open Sans" fontSize="42" fontWeight="700" fill="#6280bd" stroke="#c8d9f6" strokeWidth="5" paintOrder="stroke" lengthAdjust="spacing">
        <text x="858" y="403" textLength="184">Atlantic</text>
        <text x="879" y="452" textLength="144">Ocean</text>
        <text x="2151" y="981" textLength="146">Indian</text>
        <text x="2153" y="1030" textLength="144">Ocean</text>
        <text x="2648" y="1333" fontSize="43" letterSpacing="8">Sout</text>
      </g>
      <g fontFamily="Open Sans" fontSize="41" fontWeight="700" fill="#505050" stroke="#fff" strokeWidth="7" paintOrder="stroke">
        <text x="671" y="935" textLength="340" lengthAdjust="spacingAndGlyphs">SOUTH AMERICA</text>
        <text x="1579" y="695" textLength="145" lengthAdjust="spacingAndGlyphs">AFRICA</text>
      </g>
    </svg>
  );
}

/* ---------- data ---------- */

const logFiles = [
  '21-10-11-02-56-04_FLY093.DAT',
  '21-10-11-03-00-17_FLY094.DAT',
  '21-10-11-03-04-05_FLY095.DAT',
  '21-10-11-03-05-18_FLY096.DAT',
  '21-10-11-03-06-18_FLY096.DAT',
  '21-10-11-11-21-25_FLY092.DAT',
];
const waypoints: [string, string][] = [
  ['(22.269298, 114.201...', '2021-10-11 15:06:39'],
  ['(22.269298, 114.201...', '2021-10-11 7:06:39(...'],
  ['(22.269298, 114.201...', '2021-10-11 7:06:40(...'],
  ['(22.269299, 114.201...', '2021-10-11 7:06:41(...'],
  ['(22.269299, 114.201...', '2021-10-11 7:06:42(...'],
  ['(22.269299, 114.201...', '2021-10-11 7:06:43(...'],
  ['(22.269299, 114.201...', '2021-10-11 7:06:43(...'],
  ['(22.269299, 114.201...', '2021-10-11 7:06:44(...'],
  ['(22.269299, 114.201...', '2021-10-11 7:06:45(...'],
  ['(22.269298, 114.201...', '2021-10-11 7:06:46(...'],
];

type NodeProps = { icon: React.ReactNode; label: string; alert?: string; rest?: string; open?: boolean };

function NodeLabel({ label, alert, rest }: { label: string; alert?: string; rest?: string }) {
  const ratio = 1.09;
  return (
    <span>
      <Mixed text={label} ratio={ratio} />
      {alert && <Alert><Mixed text={` ${alert}`} ratio={ratio} /></Alert>}
      {rest && <Mixed text={` ${rest}`} ratio={ratio} />}
    </span>
  );
}
function GroupHead({ icon, open, ...text }: NodeProps) {
  return (
    <GroupRow>
      <Twist><Chevron open={open} /></Twist>
      <GroupIcon>{icon}</GroupIcon>
      <NodeLabel {...text} />
    </GroupRow>
  );
}
function Item({ icon, open, level, selected, ...text }: NodeProps & { level: number; selected?: boolean }) {
  return (
    <ItemRow $level={level} $selected={selected}>
      <Twist>{open && <Chevron open />}</Twist>
      <ItemIcon>{icon}</ItemIcon>
      <NodeLabel {...text} />
    </ItemRow>
  );
}

export default function App() {
  const rowLine = '#a9d3ea';
  return (
    <Window>
      <GlobalStyle />
      <TopStrip />
      <Body>
        <Edge><EdgeMark /></Edge>
        <Sidebar>
          <DeviceHeader>
            <CollapseButton><DoubleChevron w={2.6} /></CollapseButton>
            <Ring $size={15} $color="#17b3fb" />
            <DeviceName>Wai Phone</DeviceName>
            <Triangle $w={8} $h={5} $color="#c2c4c9" />
            <Kebab><i /></Kebab>
          </DeviceHeader>
          <SearchRow>
            <SidebarSearch><span>搜索</span><LensWhite><Lens /></LensWhite></SidebarSearch>
            <Kebab><i /></Kebab>
          </SearchRow>
          <TreeTitle>已分析的数据</TreeTitle>
          <Tree>
            <Group $cut><GroupHead icon={<NetIcon />} label="设备与网络 (6)" /></Group>
            <Group><GroupHead icon={<GrayLens><Lens size={14} w={2.4} /></GrayLens>} label="搜索与网络 (754)" alert="(134)" /></Group>
            <Group>
              <GroupHead open icon={<LogIcon />} label="系统与日志 (781)" alert="(84)" />
              <Item level={1} open icon={<DocIcon />} label="日志条目 (781)" alert="(84)" />
              {logFiles.map(f => <Item key={f} level={2} icon={<DocIcon />} label={f} />)}
            </Group>
            <Group>
              <GroupHead open icon={<MdLocationOn size={18} />} label="相关位置 (172)" alert="(2)" />
              <Item level={1} open icon={<MdLocationOn size={18} />} label="设备位置 (172)" alert="(2)" />
              <Item level={2} open icon={<JourneyIcon />} label="旅程 (9)" alert="(2)" rest="(171 路线指示点)" />
              <Item level={3} selected icon={<JourneyIcon />} label="DJI Go 4 (1)" />
              <Item level={3} icon={<JourneyIcon />} label="DJI Go 4 Dat Files (8)" alert="(2)" />
              <Item level={2} icon={<MdLocationOn size={18} />} label="位置 (1)" />
            </Group>
            <Group><GroupHead icon={<SpeechIcon />} label="消息 (35)" /></Group>
            <Group>
              <GroupHead open icon={<AppsIcon />} label="应用程序 (43)" alert="(2)" />
              <Item level={1} icon={<InstalledIcon />} label="安装的应用程序 (43)" alert="(2)" />
            </Group>
            <Group><GroupHead icon={<MdPeople size={20} />} label="用户帐户与详细信息 (224)" /></Group>
          </Tree>
        </Sidebar>

        <Main>
          <TabBar>
            <Tab $width={220}><Ring $size={18} $color="#5fc634" /><TabLabel><Mixed text="提取信息摘要 (1)" ratio={1.1} /></TabLabel><Cross /></Tab>
            <Tab $width={220}><Ring $size={18} $color="#17b3fb" /><TabLabel><Mixed text="提取信息摘要 (1)" ratio={1.1} /></TabLabel><Cross /></Tab>
            <Tab $width={330}><Ring $size={18} $color="#17b3fb" /><TabLabel><Mixed text="21-10-11-02-56-04_FLY09..." ratio={1.108} /></TabLabel><Cross /></Tab>
            <Tab $width={189} $active><Ring $size={18} $color="#17b3fb" $filled /><TabLabel><Mixed text="DJI Go 4 (1)" ratio={1.1} /></TabLabel><Cross w={1.8} /></Tab>
            <TabTools><Triangle $w={10} $h={5} $color="#999" /><Cross size={11} w={1.8} /></TabTools>
          </TabBar>
          <Workspace>
            <Center>
              <Timeline>
                <TimelineBar />
                <TimelineEmpty>
                  <svg width="28" height="28" viewBox="0 0 28 28" fill="none" stroke="#a3a3a3" strokeWidth="2.800">
                    <rect x="1.500" y="1.500" width="25" height="25" rx="1" /><path d="M2 9h24" />
                  </svg>
                  未显示带时间戳的事件
                </TimelineEmpty>
                <HScroll $indent={1}>
                  <ArrowCell $shade><SmallArrow d={arrowLeft} /></ArrowCell>
                  <HThumb $width={879} $grow />
                  <ArrowCell $shade><SmallArrow d={arrowRight} /></ArrowCell>
                </HScroll>
              </Timeline>
              <Toolbar>
                <TagIcon />
                <TagCaret $w={9} $h={6} $color="#000" />
                <Divider $h={28} $gap="0 6px 0 8px" />
                <ToolToggle $on><ListIcon marks="voo" /></ToolToggle>
                <ToolToggle><ListIcon marks="vvv" /></ToolToggle>
                <ToolToggle><ListIcon marks="ooo" /></ToolToggle>
                <Divider $h={28} $gap="0 14px 0 -1px" />
                <ToolMenu $width={71}>导出<Triangle $w={9} $h={6} $color="#000" /></ToolMenu>
                <ToolMenu $width={88}>过滤器<Triangle $w={9} $h={6} $color="#000" /></ToolMenu>
                <ToolMenu $width={52}>操作<Triangle $w={9} $h={6} $color="#000" /></ToolMenu>
                <ToolSearch>
                  <span>搜索</span>
                  <LensDark><Lens size={15} /></LensDark>
                  <Divider $h={16} $gap="0 7px 0 7px" />
                  <Triangle $w={10} $h={5} $color="#000" />
                </ToolSearch>
              </Toolbar>
              <MapView>
                <WorldMap />
                <EyeButton>
                  <svg width="18" height="12" viewBox="0 0 18 12"><path d="M0 6Q9-6 18 6 9 18 0 6z" /><circle cx="9" cy="6" r="3.900" fill="#ddd" /><circle cx="9" cy="6" r="2.500" /><circle cx="9" cy="6" r="1" fill="#ddd" /></svg>
                </EyeButton>
                <ZoomTools>
                  <ZoomButton><svg width="12" height="12" viewBox="0 0 12 12" stroke="#000" strokeWidth="2"><path d="M0 6h12M6 0v12" /></svg></ZoomButton>
                  <ZoomTrack />
                  <ZoomThumb />
                  <ZoomButton><svg width="12" height="12" viewBox="0 0 12 12" stroke="#000" strokeWidth="2"><path d="M0 6h12" /></svg></ZoomButton>
                </ZoomTools>
                <CoordBox><span>49° 09' 10.69" S 59° 41' 43.13" E</span><strong>在线地图</strong></CoordBox>
                <Scale><ScaleBar /><ScaleLabel>5000 km</ScaleLabel></Scale>
                <CornerButton><div><svg width="8" height="9" viewBox="0 0 8 9"><path d="M0 0v9h8z" /></svg></div></CornerButton>
                <HomePin><MdHome size={18} /></HomePin>
              </MapView>
              <TableWrap>
                <TableBar />
                <TableLine $head>
                  <Cell $pad={6}>
                    <svg width="20" height="18" viewBox="0 0 20 18" fill="none" stroke="#777" strokeWidth="1.300"><path d="M1 17V1h6l2 3h9v3M1 17L5 7h14.500l-1.500 10z" /></svg>
                    <svg width="19" height="18" viewBox="0 0 19 18" fill="none" stroke="#777" strokeWidth="1.300"><path d="M1 17V1h6l2 3h9v13z" /></svg>
                  </Cell>
                  <Cell $pad={7}><svg width="19" height="18" viewBox="0 0 19 18" fill="none" stroke="#666" strokeWidth="1.200"><path d="M1 1h4v16H1zM7.500 10h4v7h-4zM13.500 10h4v7h-4z" /></svg></Cell>
                  <Cell $pad={8}>
                    <svg width="18" height="14" viewBox="0 0 18 14" stroke="#555" strokeWidth="2"><path d="M0 7h18" /></svg>
                    <svg width="18" height="14" viewBox="0 0 18 14" fill="none" stroke="#555" strokeWidth="2.400"><path d="M1 7l5 5L17 1" /></svg>
                  </Cell>
                  <Cell $pad={6}>#</Cell>
                  <Cell $pad={6}><TagIcon /></Cell>
                  <Cell $pad={8}><GrayInk><Cross size={15} w={1.1} /></GrayInk></Cell>
                  <Cell $pad={7}><svg width="18" height="17" viewBox="0 0 18 17" fill="none" stroke="#555" strokeWidth="2"><path d="M1 10.500Q1 4 4 3.500 7 1 12 1.200M4.500 3.500L16.500 15.500" /></svg></Cell>
                  <Cell $pad={7} $end={14} $line="transparent">
                    <svg width="9" height="17" viewBox="0 0 9 17" fill="#444"><path d="M3.800 0h1.400v11H9l-4.500 6L0 11h3.800z" /></svg>
                    <HeadText $shift={-6}>开始时间</HeadText>
                    <Triangle $w={9} $h={6} $color="#000" />
                  </Cell>
                  <Cell $pad={5} $end={14}><HeadText $shift={0}>结束时间</HeadText><Triangle $w={9} $h={6} $color="#000" /></Cell>
                  <Cell $pad={6} $line="none">起点</Cell>
                </TableLine>
                <TableLine>
                  <Cell $pad={6} $line={rowLine} />
                  <Cell $pad={6} $line={rowLine}><Flag /></Cell>
                  <Cell $pad={5} $line={rowLine}><Check><svg width="16" height="16" viewBox="0 0 16 16" fill="none" stroke="#fff" strokeWidth="2"><path d="M2.500 8l3.500 3.500L13.500 4" /></svg></Check></Cell>
                  <Cell $pad={13} $line={rowLine}><Mixed text="1" /></Cell>
                  <Cell $pad={0} $line={rowLine} />
                  <Cell $pad={0} $line={rowLine} />
                  <Cell $pad={0} $line={rowLine} />
                  <Cell $pad={6} $line={rowLine}><Mixed text="2021-10-11 15:06:39" ratio={1.045} /></Cell>
                  <Cell $pad={4} $line={rowLine}><Mixed text="2021-10-11 7:07:42(UTC+0)" ratio={1.06} /></Cell>
                  <Cell $pad={5} $line="none"><Mixed text="(22.269298" ratio={1} /></Cell>
                </TableLine>
                <TableScroll $indent={6}>
                  <ArrowCell><SmallArrow d={arrowLeft} /></ArrowCell>
                  <HThumb $width={354} />
                  <ArrowCell><SmallArrow d={arrowRight} /></ArrowCell>
                </TableScroll>
              </TableWrap>
              <StatusBar>
                <Mixed text="总计: 1" /><Mixed text="删除重复: 0" /><Mixed text="项目: 1/1" /><Mixed text="已选中: 1" />
              </StatusBar>
            </Center>

            <UpButton><DoubleChevron turn={90} color="#0b63d6" size={14} /></UpButton>
            <Splitter />

            <Detail>
              <DetailHeader>
                <DoubleChevron turn={180} w={1.8} />
                <h1>旅程</h1>
                <span>转到</span>
                <Triangle $w={8} $h={4} $color="#222" />
              </DetailHeader>
              <DetailBody>
                <Facts>
                  <Fact $tall><dt>开始时间:</dt><dd><Mixed text="2021-10-11 15:06:39" ratio={1.045} /></dd></Fact>
                  <Fact><dt>结束时间:</dt><dd><Mixed text="2021-10-11 7:07:42(UTC+0)" ratio={1.06} /></dd></Fact>
                  <Fact><dt>名称:</dt><dd><Mixed text="SSPARK" ratio={1.06} /></dd></Fact>
                  <Fact><dt>来源:</dt><dd><Mixed text="DJI Go 4" ratio={1.075} /></dd></Fact>
                  <Fact><dt>帐户:</dt><dd /></Fact>
                  <Fact><dt>提取:</dt><dd>物理</dd></Fact>
                  <Fact>
                    <dt>源文件:</dt>
                    <dd>
                      <Mixed text="Image16 (ExtX)/Root/media/0/DJI/dji.go.v4/" ratio={1.06} /><br />
                      <Mixed text="FlightRecord/DJIFlightRecord_2021-10-11_" ratio={1.06} /><br />
                      <Mixed text="[15-06-39].txt : 0x180B4(大小: 281027 字节)" ratio={1.035} />
                    </dd>
                  </Fact>
                </Facts>
                <SectionHead $h={36}>起点</SectionHead>
                <PointRow $gap={10}><Mixed text="(22.269298, 114.201270)" ratio={1.02} /><Mixed text="0.00" /><Mixed text="2021-10-11 15:06..." ratio={1.05} /></PointRow>
                <SectionHead $h={36}>终点</SectionHead>
                <PointRow $gap={12}><Mixed text="(22.269326, 114.201249, -2)" ratio={1.025} /><Mixed text="-2.00" /><Mixed text="2021-10-11 7:07:..." ratio={1.05} /></PointRow>
                <SectionHead $h={38}>
                  <Mixed text="路线指示点  (80)" ratio={1.08} />
                  <PlayButton><svg width="12" height="12" viewBox="0 0 12 12" fill="#0a93ff"><path d="M0 0l12 6-12 6z" /></svg>播放</PlayButton>
                </SectionHead>
                <Waypoints>
                  <WaypointTable>
                    <WaypointHead><div /><div>位置</div><div>时间戳</div><div /></WaypointHead>
                    {waypoints.map(([p, t], i) => (
                      <WaypointRow key={i} $on={i === 0}><span /><Mixed text={p} ratio={1.015} /><Mixed text={t} ratio={1.045} /></WaypointRow>
                    ))}
                  </WaypointTable>
                  <InnerScroll $width={18}>
                    <svg width="10" height="6" viewBox="0 0 10 6" fill="#b5b5b5"><path d="M5 0l5 6H0z" /></svg>
                    <VThumb $h={151} />
                  </InnerScroll>
                </Waypoints>
              </DetailBody>
            </Detail>
            <OuterScroll $width={16}>
              <svg width="10" height="6" viewBox="0 0 10 6" fill="#b5b5b5"><path d="M5 0l5 6H0z" /></svg>
              <VThumb $h={524} />
              <svg width="10" height="6" viewBox="0 0 10 6" fill="#b5b5b5"><path d="M5 6L0 0h10z" /></svg>
            </OuterScroll>
          </Workspace>
        </Main>
      </Body>
      <Ink width="1841" height="912" viewBox="0 0 1841 912" fill="none" stroke="#ff0808" strokeWidth="2.200" strokeLinecap="round" strokeLinejoin="round">
        <path d="M132 697.500L142 697 155 692 170 690 206 690 215 693 229 696" />
        <path d="M1431 188Q1462 186 1484 190 1503 193 1517 200 1530 203 1544 209 1550 213 1550 222 1549 232 1541 238 1531 243 1518 253L1512 254 1466 252 1421 249 1413 239 1408 229Q1406 218 1408 211 1409 203 1418 199 1426 195 1456 193.500" />
      </Ink>
    </Window>
  );
}
